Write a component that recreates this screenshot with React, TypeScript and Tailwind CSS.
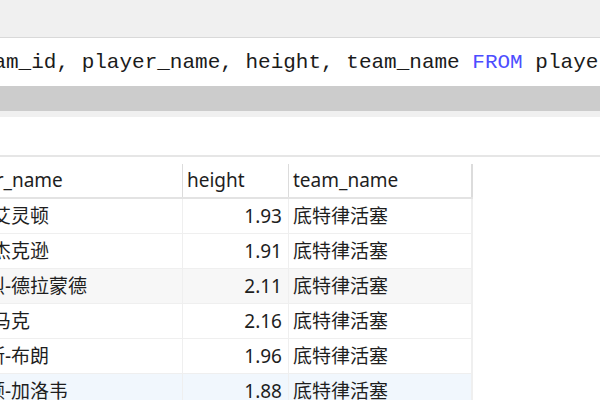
const rows = [
  { name: "韦恩-艾灵顿", height: "1.93", team: "底特律活塞", bg: "bg-white" },
  { name: "雷吉-杰克逊", height: "1.91", team: "底特律活塞", bg: "bg-white" },
  { name: "安德烈-德拉蒙德", height: "2.11", team: "底特律活塞", bg: "bg-[#f7f7f7]" },
  { name: "索恩-马克", height: "2.16", team: "底特律活塞", bg: "bg-white" },
  { name: "布鲁斯-布朗", height: "1.96", team: "底特律活塞", bg: "bg-white" },
  { name: "兰斯顿-加洛韦", height: "1.88", team: "底特律活塞", bg: "bg-[#f1f7fd]" },
]

const sans = "font-['Noto_Sans','Noto_Sans_CJK_SC',sans-serif]"

export default function App() {
  return (
    <div className="w-[600px] h-[400px] overflow-hidden bg-white flex flex-col">
      {/* toolbar strip */}
      <div className="h-[38px] shrink-0 bg-[#f0f0f0] border-b border-[#d9d9d9]" />

      {/* query editor */}
      <div className="h-[48px] shrink-0 flex items-center overflow-hidden">
        <div className="-ml-[120px] whitespace-nowrap font-['Liberation_Mono',monospace] text-[21px] leading-none text-[#1b1b1b]">
          SELECT team_id, player_name, height, team_name <span className="text-[#4d4dff]">FROM</span> player
        </div>
      </div>

      <div className="h-[25px] shrink-0 bg-[#cccccc]" />
      <div className="h-[6px] shrink-0 bg-[#f0f0f0]" />
      <div className="h-[38px] shrink-0" />
      <div className="h-[2px] shrink-0 bg-[#e6e6e6]" />
      <div className="h-[7px] shrink-0" />

      {/* result grid */}
      <div className={`w-[473px] flex flex-col ${sans} text-[19px] text-[#1e1e1e]`}>
        <div className="flex h-[35px] border-b-2 border-[#e3e3e3]">
          <div className="-ml-[57px] w-[240px] shrink-0 pl-[5px] flex items-center border-r border-[#dcdcdc]">player_name</div>
          <div className="w-[106px] shrink-0 pl-[4px] flex items-center border-r border-[#dcdcdc]">height</div>
          <div className="w-[184px] shrink-0 pl-[4px] flex items-center border-r-2 border-[#dcdcdc]">team_name</div>
        </div>
        {rows.map((r) => (
          <div key={r.name} className={`flex h-[35px] border-b border-[#efefef] ${r.bg}`}>
            <div className="-ml-[57px] w-[240px] shrink-0 pl-[5px] flex items-center border-r border-[#efefef] whitespace-nowrap">{r.name}</div>
            <div className="w-[106px] shrink-0 pr-[6px] flex items-center justify-end border-r border-[#efefef]">{r.height}</div>
            <div className="w-[184px] shrink-0 pl-[4px] flex items-center border-r-2 border-[#efefef]">{r.team}</div>
          </div>
        ))}
      </div>
    </div>
  )
}
